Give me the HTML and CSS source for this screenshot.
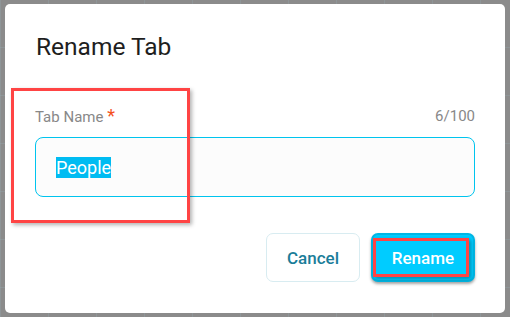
FILE: index.html
```html
<!DOCTYPE html>
<html lang="en">
<head>
  <meta charset="UTF-8" />
  <meta name="viewport" content="width=device-width, initial-scale=1.0" />
  <title>Rename Tab</title>
  <link rel="stylesheet" href="styles.css">
</head>
<body>
  <div class="dialog">
    <h2 class="dialog-title">Rename Tab</h2>

    <div class="field">
      <div class="field-head">
        <label class="field-label">Tab Name <span class="required">*</span></label>
        <span class="field-count">6/100</span>
      </div>
      <div class="field-input"><span class="selected">People</span></div>
    </div>

    <div class="actions">
      <button class="btn btn-cancel">Cancel</button>
      <button class="btn btn-primary">Rename<span class="mark mark-btn"></span></button>
    </div>

    <!-- annotation box over the label/input -->
    <div class="mark mark-field"></div>
  </div>
</body>
</html>
```

FILE: styles.css
```css
body {
  margin: 0;
  font-family: Roboto, "Liberation Sans", Arial, sans-serif;
  background-color: #8b8b8b;
  background-image:
    linear-gradient(90deg, rgba(150, 170, 175, 0.35) 1px, transparent 1px),
    linear-gradient(0deg, rgba(150, 170, 175, 0.35) 1px, transparent 1px);
  background-size: 48px 48px;
  height: 317px;
  overflow: hidden;
}
.dialog {
  position: relative;
  box-sizing: border-box;
  width: 500px;
  height: 309px;
  margin: 4px 0 0 5px;
  padding: 27px 30px 0 30px;
  background-color: #fff;
  border-radius: 5px;
}
.dialog-title {
  margin: 0 0 0 1px;
  font-size: 24.5px;
  line-height: 32px;
  font-weight: 400;
  color: #1e1e1e;
}
.field {
  margin-top: 43px;
}
.field-head {
  display: flex;
  justify-content: space-between;
  font-size: 15px;
  line-height: 20px;
  color: #888;
  margin-bottom: 10px;
}
.required {
  color: #f4511e;
  font-size: 18px;
}
.field-input {
  box-sizing: border-box;
  height: 60px;
  padding: 0 20px;
  border: 1px solid #00c4ee;
  border-radius: 8px;
  background-color: #fcfcfc;
  display: flex;
  align-items: center;
  font-size: 18px;
}
.selected {
  background-color: #00bcf2;
  color: #fff;
}
.actions {
  display: flex;
  justify-content: flex-end;
  gap: 11px;
  margin-top: 36px;
}
.btn {
  position: relative;
  box-sizing: border-box;
  height: 49px;
  font-family: inherit;
  font-size: 17px;
  font-weight: 500;
  border-radius: 7px;
  cursor: pointer;
}
.btn-cancel {
  width: 94px;
  background-color: #fff;
  color: #1a7d99;
  border: 1px solid #d8ecf1;
}
.btn-primary {
  width: 104px;
  background-color: #00ccff;
  color: #fff;
  border: 2px solid #00b6e4;
  box-shadow: 0 2px 3px rgba(0, 0, 0, 0.35);
}
.mark {
  position: absolute;
  box-sizing: border-box;
  border: 3px solid #ff4444;
  box-shadow: 2px 2px 4px rgba(0, 0, 0, 0.3);
  pointer-events: none;
}
.mark-field {
  left: 6px;
  top: 84px;
  width: 179px;
  height: 135px;
}
.mark-btn {
  left: 0;
  top: 3px;
  width: 96px;
  height: 39px;
}
```
